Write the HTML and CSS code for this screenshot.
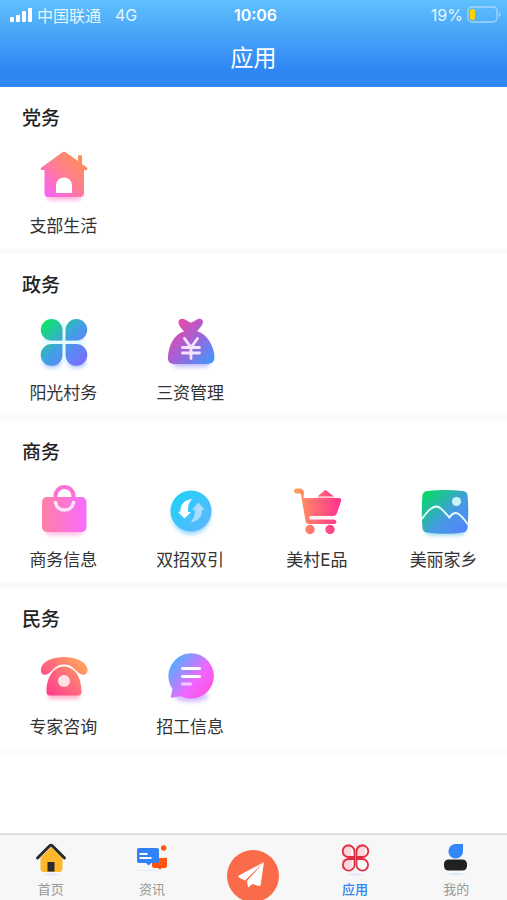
FILE: index.html
```html
<!DOCTYPE html>
<html lang="zh-CN">
<head>
<meta charset="utf-8">
<meta name="viewport" content="width=device-width, initial-scale=1">
<title>应用</title>
<link rel="stylesheet" href="styles.css">
</head>
<body>
<svg class="defs" aria-hidden="true">
  <defs>
    <filter id="soft" x="-30%" y="-100%" width="160%" height="300%"><feGaussianBlur stdDeviation="2"/></filter>
    <linearGradient id="g-house" x1="0" y1="1" x2="1" y2="0"><stop offset=".1" stop-color="#fb62f0"/><stop offset=".5" stop-color="#ff7d93"/><stop offset="1" stop-color="#ff973f"/></linearGradient>
    <linearGradient id="g-clover" gradientUnits="userSpaceOnUse" x1="10" y1="8" x2="52" y2="50"><stop offset="0" stop-color="#0be763"/><stop offset=".5" stop-color="#439ee8"/><stop offset="1" stop-color="#7c6aff"/></linearGradient>
    <linearGradient id="g-money" x1="0" y1="0" x2="1" y2="1"><stop offset=".1" stop-color="#f345a5"/><stop offset=".55" stop-color="#9a65d9"/><stop offset="1" stop-color="#389eff"/></linearGradient>
    <linearGradient id="g-bag" x1="0" y1="0" x2="1" y2="0"><stop offset="0" stop-color="#ff81a4"/><stop offset="1" stop-color="#f96bff"/></linearGradient>
    <linearGradient id="g-sync" x1="0" y1="0" x2="1" y2="1"><stop offset="0" stop-color="#19d4f5"/><stop offset="1" stop-color="#62b4ff"/></linearGradient>
    <linearGradient id="g-cart" gradientUnits="userSpaceOnUse" x1="7" y1="0" x2="54" y2="0"><stop offset="0" stop-color="#ffa05c"/><stop offset="1" stop-color="#ff2e92"/></linearGradient>
    <linearGradient id="g-photo" x1="0" y1="0" x2="1" y2="1"><stop offset=".05" stop-color="#05db62"/><stop offset=".6" stop-color="#4798e5"/><stop offset="1" stop-color="#5580ff"/></linearGradient>
    <linearGradient id="g-phone" gradientUnits="userSpaceOnUse" x1="14" y1="47" x2="50" y2="10"><stop offset="0" stop-color="#ff3b91"/><stop offset=".5" stop-color="#ff6f7b"/><stop offset="1" stop-color="#ffaa59"/></linearGradient>
    <linearGradient id="g-chat" x1="0" y1=".1" x2="1" y2=".9"><stop offset=".05" stop-color="#42b6ff"/><stop offset=".6" stop-color="#f066ff"/><stop offset="1" stop-color="#ff4ddd"/></linearGradient>
  </defs>
</svg>

<header class="top">
  <div class="status">
    <div class="carrier">
      <svg class="signal" viewBox="0 0 23 14" aria-hidden="true"><g fill="#fff"><rect y="9" width="4" height="5" rx="1"/><rect x="6" y="7" width="4" height="7" rx="1"/><rect x="12" y="3" width="4" height="11" rx="1"/><rect x="18" width="4" height="14" rx="1"/></g></svg>
      <span>中国联通</span>
      <span class="network">4G</span>
    </div>
    <time class="clock">10:06</time>
    <div class="power">
      <span>19%</span>
      <svg class="battery" viewBox="0 0 34 18" aria-hidden="true"><rect x="1" y="1" width="29" height="15" rx="4" fill="none" stroke="#a5d5fb" stroke-width="1.4"/><rect x="3" y="3" width="5" height="11" rx="2" fill="#ffd400"/><path d="M32 6v5c2-1 2-4 0-5z" fill="#a5d5fb"/></svg>
    </div>
  </div>
  <h1>应用</h1>
</header>

<main>
  <section class="group">
    <h2>党务</h2>
    <div class="apps">
      <a class="app" href="#branch">
        <svg viewBox="0 0 60 60" aria-hidden="true"><rect x="14" y="44" width="34" height="9" rx="4" fill="#fb7ac8" opacity=".6" filter="url(#soft)"/><path fill="url(#g-house)" d="M29 5.600Q31 4 33 5.600L45 14V9.500Q45 8 46.500 8H47.500Q49 8 49 9.500V17L54 20.500Q55.500 22 53.500 23H51V46Q51 50 47 50H15.500Q11.500 50 11.500 46V23H9Q6.500 22 8.500 20.500Z"/><path fill="#fff" d="M23 46H39V38A8 7.500 0 0 0 23 38Z"/></svg>
        <span>支部生活</span>
      </a>
    </div>
  </section>

  <section class="group">
    <h2>政务</h2>
    <div class="apps">
      <a class="app" href="#village">
        <svg viewBox="0 0 60 60" aria-hidden="true"><g fill="#5b95f5" opacity=".55" filter="url(#soft)"><ellipse cx="19" cy="48" rx="9" ry="6"/><ellipse cx="44" cy="48" rx="9" ry="6"/><path d="M12 24h38v4H12z"/></g><path d="M30.800 8v41M9 28.200h44" stroke="#e4fbff" stroke-width="3"/><path fill="url(#g-clover)" d="M18.500 5A11 11 0 0 1 29.500 16V26.500H18.500A10.750 10.750 0 0 1 18.500 5ZM43.500 5A10.750 10.750 0 0 1 43.500 26.500H32.500V16A11 11 0 0 1 43.500 5ZM18.500 30H29.500V41A10.900 10.900 0 1 1 18.500 30ZM32.500 30H43.500A10.900 10.900 0 1 1 32.500 41Z"/></svg>
        <span>阳光村务</span>
      </a>
      <a class="app" href="#assets">
        <svg viewBox="0 0 60 60" aria-hidden="true"><rect x="12" y="43" width="38" height="10" rx="5" fill="#9a8afc" opacity=".6" filter="url(#soft)"/><path fill="url(#g-money)" d="M24 17.500C21 14 19 12 18.500 9C18 5 22 4 25 5.500C28 7 29 8.500 31 8.500C33 8.500 35 6 38 5C42 4 44 7 42.500 10C41.500 13 38 15 37.500 17.500C47 20 54 32 54.500 43C54.500 48 51.500 50 47 50H15C10 50 7.500 48 8 43C8.500 32 14 20 24 17.500Z"/><path d="M24.500 24.500l6.500 9 6.500-9M31 34v10.500M22.500 33.500h17M22.500 39h17" fill="none" stroke="#f6e4ff" stroke-width="2.800" stroke-linecap="round"/></svg>
        <span>三资管理</span>
      </a>
    </div>
  </section>

  <section class="group">
    <h2>商务</h2>
    <div class="apps">
      <a class="app" href="#business">
        <svg viewBox="0 0 60 60" aria-hidden="true"><rect x="12" y="44" width="38" height="10" rx="5" fill="#ff8bd4" opacity=".6" filter="url(#soft)"/><path d="M22.500 18V15a9 9 0 0 1 18 0v3" fill="none" stroke="#fb70d3" stroke-width="4"/><rect x="9" y="16" width="44.500" height="35" rx="5" fill="url(#g-bag)"/><path d="M22.500 21.500c1.500 10 16.500 10 18 0" fill="none" stroke="#ffe3f8" stroke-width="3.500" stroke-linecap="round"/></svg>
        <span>商务信息</span>
      </a>
      <a class="app" href="#invest">
        <svg viewBox="0 0 60 60" aria-hidden="true"><circle cx="31" cy="34" r="19.500" fill="#55bdfb" opacity=".6" filter="url(#soft)"/><circle cx="31" cy="30" r="20.500" fill="url(#g-sync)"/><path fill="#fff" d="M32 18C24 19 20 24 20.500 30.500L18 31L24.500 37.500L31 31H28C27.500 26 28.500 22 32 18Z"/><path fill="#a9dcff" d="M38.500 21.500L44.500 28.500L42 29C42 36 38 40.500 30 41.500C34 38 35 34 35 29L32 28.500Z"/></svg>
        <span>双招双引</span>
      </a>
      <a class="app" href="#goods">
        <svg viewBox="0 0 60 60" aria-hidden="true"><g fill="url(#g-cart)"><path d="M30.500 15.500L37 10Q38.500 8 40 10L47 15.500Z"/><path d="M16.500 17H52Q55 17 54 20L50 32Q49 35 46 35H23L22.500 38.500H47Q49.500 39 49.500 41Q49.500 43 47 43H22Q19 43 18.500 40L14 13.500Q13.700 12.500 12.500 12.500H9.500A2.500 2.500 0 0 1 9.500 7.500H13Q16 7.500 17 11Z"/><circle cx="23" cy="48.500" r="4.700"/><circle cx="43" cy="48.500" r="4.700"/></g><path d="M31 16.300h16" stroke="#ffb4bf"/><path d="M22.500 36.500h25" stroke="#fff0f4" stroke-width="2.500"/></svg>
        <span>美村E品</span>
      </a>
      <a class="app" href="#home-town">
        <svg viewBox="0 0 60 60" aria-hidden="true"><rect x="11" y="42" width="40" height="12" rx="5" fill="#55c2dc" opacity=".7" filter="url(#soft)"/><path fill="url(#g-photo)" d="M13 10Q31 8 49 10Q53 10.500 53.500 14Q55 30 53.500 47Q53 51 49 51.500Q31 54 13 51.500Q9 51 8.500 47Q7 30 8.500 14Q9 10.500 13 10Z"/><path d="M8 38C12 32 18 25.500 22.500 25.500C27 25.500 31 32 35.500 36.500C37 34 39.500 32 42 32C46 32 50 38 54 43.500" fill="none" stroke="#e5fff9" stroke-width="1.800"/><circle cx="42.500" cy="20.500" r="4.500" fill="#c9f2ff"/></svg>
        <span>美丽家乡</span>
      </a>
    </div>
  </section>

  <section class="group">
    <h2>民务</h2>
    <div class="apps">
      <a class="app" href="#expert">
        <svg viewBox="0 0 60 60" aria-hidden="true"><rect x="15" y="42" width="32" height="9" rx="4" fill="#ff7ba5" opacity=".6" filter="url(#soft)"/><g fill="url(#g-phone)"><path d="M8 21C9 13 20 9 31 9C42 9 53 13 54.500 21C55 26 51 28 47.500 26C42 23 40 16.500 31 16.500C22 16.500 20 23 15 26C11 28 7 26 8 21Z"/><path d="M31 18.500C41 18.500 48 28 48.500 42Q49 47.500 45 47.500H17Q13 47.500 13.500 42C14 28 21 18.500 31 18.500Z"/></g><circle cx="31" cy="33" r="6" fill="#ffe0e4"/></svg>
        <span>专家咨询</span>
      </a>
      <a class="app" href="#jobs">
        <svg viewBox="0 0 60 60" aria-hidden="true"><ellipse cx="31" cy="48" rx="17" ry="6" fill="#b792ff" opacity=".6" filter="url(#soft)"/><path fill="url(#g-chat)" d="M31.200 5.300A22.700 22.700 0 1 1 21 48.300C18 48.500 15 49 12 49.700Q10.500 50 11 48L12.500 41A22.700 22.700 0 0 1 31.200 5.300Z"/><path d="M22.500 20.500h17M22.500 28.500h17" stroke="#fff" stroke-width="3" stroke-linecap="round"/><path d="M22.500 36h8" stroke="#f5c9ff" stroke-width="3" stroke-linecap="round"/></svg>
        <span>招工信息</span>
      </a>
    </div>
  </section>
</main>

<nav class="tabs" aria-label="主导航">
  <a class="tab" href="#home">
    <svg viewBox="0 0 36 36" aria-hidden="true"><ellipse cx="18" cy="33.500" rx="8" ry="1.200" fill="#dfe8fb"/><path d="M18 6L29.500 17V27.500Q29.500 31 26 31H11Q7.500 31 7.500 27.500V17Z" fill="#ffb72b"/><path d="M4.500 17L16.500 5Q18 3.500 19.500 5L31.500 17" fill="none" stroke="#292b2d" stroke-width="3" stroke-linecap="round"/><path d="M14.500 21h7v9.500h-7z" fill="#292b2d"/></svg>
    <span>首页</span>
  </a>
  <a class="tab" href="#news">
    <svg viewBox="0 0 36 36" aria-hidden="true"><path d="M3 29.500h25" stroke="#e3eafa" stroke-width="1"/><path d="M20 17H30Q33 15.500 33 18V25Q33 27 31 27H28L26 28.500L24 27H20Q18 27 18 25V19Q18 17 20 17Z" fill="#ff5510"/><path d="M5 7H23Q25 7 25 9V20Q25 22 23 22H17.500L14.500 24.500L12 22H5Q3 22 3 20V9Q3 7 5 7Z" fill="#3282fa"/><path d="M5.500 13h8M5.500 17h12" stroke="#fff" stroke-width="2"/><circle cx="29.700" cy="7" r="2.800" fill="#ff5510"/></svg>
    <span>资讯</span>
  </a>
  <a class="publish" href="#publish" aria-label="发布">
    <svg viewBox="0 0 52 52" aria-hidden="true"><circle cx="26" cy="26" r="26" fill="#fa6b49"/><path fill="#fff" d="M37 12L11 26Q11 27.500 18 30.500ZM37 12L20 31L21 37.500L25.500 34L32 36Q33.500 36 33.700 34.500Z"/></svg>
  </a>
  <a class="tab active" href="#apps" aria-current="page">
    <svg viewBox="0 0 36 36" aria-hidden="true"><ellipse cx="18" cy="33.500" rx="8" ry="1.200" fill="#dfe8fb"/><path d="M9 3h5v12H5V7zM19 5l3-2h6v12h-9zM5 18h10v10H5z" fill="#fcc5cb"/><g fill="#fff" fill-opacity=".35" stroke="#df2f3e" stroke-width="1.800"><path d="M11.500 4.500A6 6 0 0 1 17.500 10.500V16H11.500A5.750 5.750 0 0 1 11.500 4.500Z"/><path d="M25.500 4.500A5.750 5.750 0 0 1 25.500 16H19.500V10.500A6 6 0 0 1 25.500 4.500Z"/><path d="M11.500 18H17.500V23.500A5.800 5.800 0 1 1 11.500 18Z"/><path d="M19.500 18H25.500A5.800 5.800 0 1 1 19.500 23.500Z"/></g></svg>
    <span>应用</span>
  </a>
  <a class="tab" href="#mine">
    <svg viewBox="0 0 36 36" aria-hidden="true"><ellipse cx="18" cy="33" rx="9" ry="1.200" fill="#dfe8fb"/><path d="M18 3H25V10A7.300 7.300 0 1 1 18 3Z" fill="#3387fb"/><rect x="6" y="18.500" width="23" height="11" rx="4.500" fill="#202123"/></svg>
    <span>我的</span>
  </a>
</nav>
</body>
</html>
```
FILE: styles.css
```css
* {
  box-sizing: border-box;
}

body {
  margin: 0;
  min-height: 100vh;
  display: flex;
  flex-direction: column;
  background: #fff;
  color: #333;
  font-family: Inter, "Noto Sans CJK SC", sans-serif;
}

a {
  color: inherit;
  text-decoration: none;
}

h1,
h2 {
  margin: 0;
}

.defs {
  position: absolute;
  width: 0;
  height: 0;
}

.top {
  padding-bottom: 12px;
  background: linear-gradient(#5fc0fd, #2f87f3 80%, #2f87f3);
  color: #fff;
}

.status {
  display: grid;
  grid-template-columns: 1fr auto 1fr;
  align-items: center;
  height: 30px;
  padding: 0 6px 0 10px;
  font-size: 16px;
}

.carrier,
.power {
  display: flex;
  align-items: center;
  gap: 4px;
  color: #e6f5ff;
}

.power {
  justify-content: flex-end;
}

.signal {
  width: 23px;
  height: 14px;
}

.network {
  margin-left: 10px;
}

.clock {
  font-weight: 600;
}

.battery {
  width: 34px;
  height: 18px;
}

.top h1 {
  padding-top: 11px;
  font-size: 23px;
  font-weight: 400;
  line-height: 34px;
  text-align: center;
}

main {
  flex: 1;
}

.group {
  padding-top: 18px;
  padding-bottom: 10px;
  border-bottom: 6px solid #fafafa;
}

.group h2 {
  padding-left: 22px;
  font-size: 19px;
  font-weight: 500;
  line-height: 28px;
  color: #222;
}

.apps {
  display: grid;
  grid-template-columns: repeat(4, 1fr);
  padding-top: 14px;
}

.app {
  display: flex;
  flex-direction: column;
  align-items: center;
  gap: 7px;
  font-size: 17px;
  line-height: 24px;
}

.app svg {
  width: 60px;
  height: 60px;
}

.tabs {
  display: grid;
  grid-template-columns: repeat(5, 1fr);
  height: 67px;
  overflow: hidden;
  border-top: 2px solid #dedede;
  background: #f7f7f7;
  color: #999;
}

.tab {
  display: flex;
  flex-direction: column;
  align-items: center;
  gap: 2px;
  padding-top: 6px;
  font-size: 13px;
  line-height: 20px;
}

.tab svg {
  width: 36px;
  height: 36px;
  flex: none;
}

.tab.active {
  color: #2f83f5;
  font-weight: 500;
}

.publish {
  justify-self: center;
  padding-top: 15px;
}

.publish svg {
  display: block;
  width: 52px;
  height: 52px;
}
```
